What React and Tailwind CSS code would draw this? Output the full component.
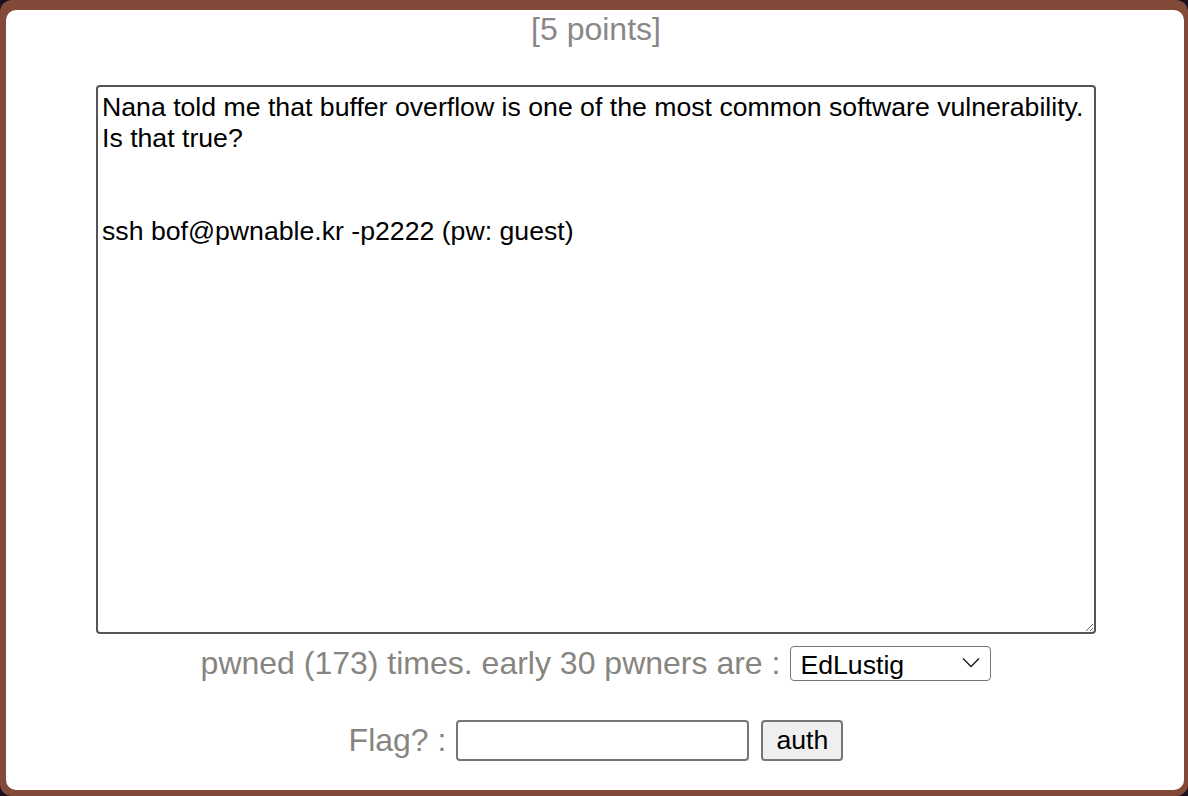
import React from "react";

export default function App() {
  const desc =
    "Nana told me that buffer overflow is one of the most common software vulnerability. \nIs that true?\n\n\nssh bof@pwnable.kr -p2222 (pw: guest)";
  return (
    <div className="h-[796px] w-[1188px] bg-[#1c0f1e] overflow-hidden" style={{ fontFamily: '"Liberation Sans", Arial, sans-serif' }}>
      <div className="h-full w-full rounded-[12px] bg-[#844a39] pt-[10px] pl-[6px] pr-[4px] pb-[6px]">
        <div className="h-full w-full rounded-[10px] bg-white flex flex-col items-center pl-[2px]">
          <div className="mt-[1px] text-[32px] leading-[37px] text-[#888888]">[5 points]</div>
          <textarea
            readOnly
            defaultValue={desc}
            className="mt-[37px] w-[1000px] h-[549px] shrink-0 border-2 border-[#555555] rounded-[4px] px-[4px] pt-[5px] text-[26.67px] leading-[31px] text-black outline-none resize"
            style={{ fontFamily: '"Liberation Sans", Arial, sans-serif' }}
          />
          <div className="mt-[11px] flex items-center gap-[10px] text-[32px] leading-[37px] text-[#878580]">
            <span>pwned (173) times. early 30 pwners are :</span>
            <div className="relative">
              <select
                className="appearance-none w-[201px] h-[35px] border border-[#767676] rounded-[4px] bg-white pl-[9px] text-[26.67px] text-black outline-none"
                style={{ fontFamily: '"Liberation Sans", Arial, sans-serif' }}
                defaultValue="EdLustig"
              >
                <option>EdLustig</option>
              </select>
              <svg className="absolute right-[11px] top-[12px] pointer-events-none" width="18" height="11" viewBox="0 0 18 11" fill="none">
                <path d="M1 1.5 L9 9.5 L17 1.5" stroke="#222" strokeWidth="1.5" />
              </svg>
            </div>
          </div>
          <div className="mt-[38px] flex items-center text-[32px] leading-[37px] text-[#878580]">
            <span>Flag? :</span>
            <input
              type="text"
              className="ml-[10px] w-[293px] h-[41px] border-2 border-[#767676] rounded-[4px] bg-white outline-none"
            />
            <button
              className="ml-[12px] w-[82px] h-[41px] border-2 border-[#767676] rounded-[4px] bg-[#efefef] text-[26.67px] text-black leading-none"
              style={{ fontFamily: '"Liberation Sans", Arial, sans-serif' }}
            >
              auth
            </button>
          </div>
        </div>
      </div>
    </div>
  );
}
